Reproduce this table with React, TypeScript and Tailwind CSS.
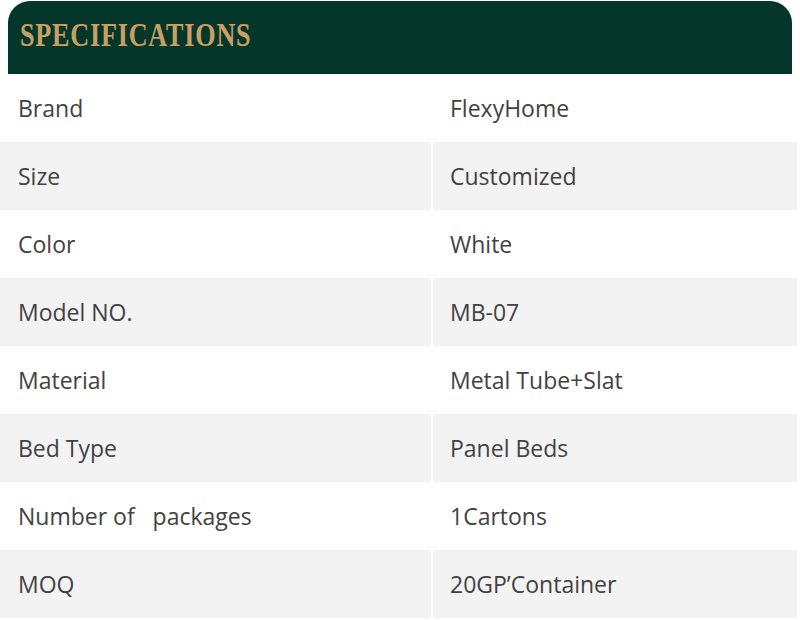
import React from 'react';

const specs: [string, string][] = [
  ['Brand', 'FlexyHome'],
  ['Size', 'Customized'],
  ['Color', 'White'],
  ['Model NO.', 'MB-07'],
  ['Material', 'Metal Tube+Slat'],
  ['Bed Type', 'Panel Beds'],
  ['Number of \u00a0 packages', '1Cartons'],
  ['MOQ', '20GP\u2019Container']
];

export default function App() {
  return (
    <div className="h-[620px] w-[800px] overflow-hidden bg-white">
      <div className="pt-px">
        <div className="mx-2 flex h-[73px] items-center rounded-t-[22px] bg-[#04372a] pb-[5px] pl-3">
          <h2
            className="origin-left scale-x-[0.77] text-[34px] leading-none font-bold tracking-[1px] text-[#c9a064]"
            style={{ fontFamily: '"Liberation Serif", serif' }}
          >
            SPECIFICATIONS
          </h2>
        </div>
      </div>
      <div
        className="mr-[3px] flex flex-col text-[23px] text-[#424242]"
        style={{ fontFamily: '"Open Sans", "Noto Sans", sans-serif' }}
      >
        {specs.map(([label, value], i) => (
          <div
            key={label}
            className={
              'flex h-[68px] items-center pt-px ' +
              (i % 2 === 1 ? 'bg-[#f3f3f3]' : 'bg-white')
            }
          >
            <div className="flex h-full w-[433px] items-center border-r-2 border-white pl-[18px]">
              {label}
            </div>
            <div className="flex h-full flex-1 items-center pl-[17px]">
              {value}
            </div>
          </div>
        ))}
      </div>
    </div>
  );
}
